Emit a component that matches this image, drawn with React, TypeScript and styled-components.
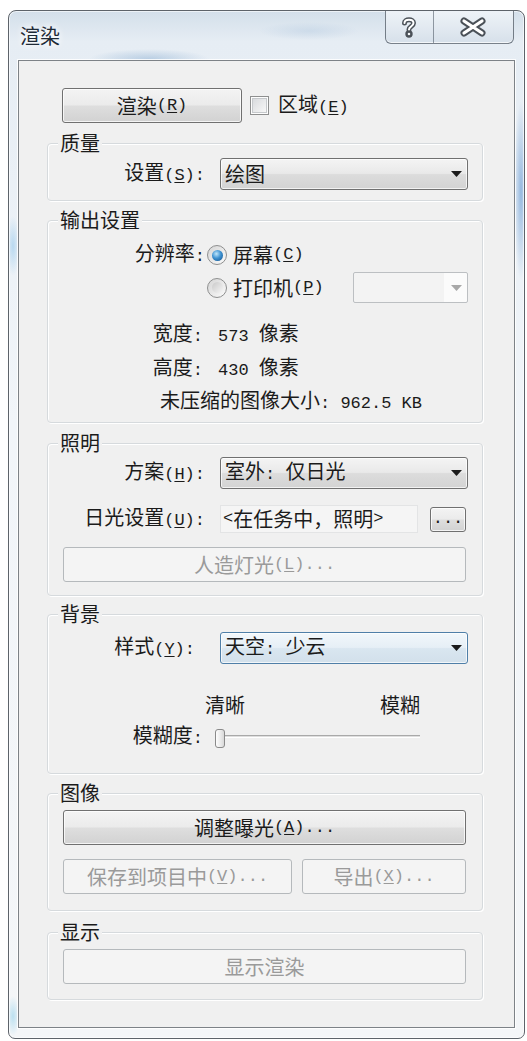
import React from "react";
import styled, { createGlobalStyle } from "styled-components";

const GlobalStyle = createGlobalStyle`
  html, body { margin: 0; padding: 0; background: #ffffff; }
  body {
    font-family: "Noto Sans CJK SC", "Liberation Sans", sans-serif;
    font-size: 20px;
    line-height: 24px;
    color: #1b1b1b;
  }
  * { box-sizing: border-box; }
`;

const Window = styled.div`
  margin: 10px 0 0 8px;
  width: 517px;
  height: 1029px;
  border: 1px solid #5d636a;
  border-radius: 8px 8px 7px 7px;
  display: flex;
  flex-direction: column;
  background:
    radial-gradient(60px 10px at 140px 48px, rgba(140, 175, 210, 0.5), transparent),
    radial-gradient(50px 9px at 300px 20px, rgba(170, 195, 220, 0.35), transparent),
    radial-gradient(7px 90px at 512px 180px, rgba(120, 165, 215, 0.75), transparent),
    radial-gradient(7px 30px at 4px 235px, rgba(150, 200, 235, 0.6), transparent),
    radial-gradient(7px 20px at 4px 1005px, rgba(150, 210, 235, 0.6), transparent),
    linear-gradient(180deg, #d3dfea 0%, #e6edf4 3%, #f1f5f9 40%, #f4f6f8 100%);
  box-shadow: inset 0 0 0 1px rgba(255, 255, 255, 0.6);
  overflow: hidden;
`;

const TitleBar = styled.div`
  height: 49px;
  display: flex;
  justify-content: space-between;
  align-items: flex-start;
  flex: none;
`;

const Title = styled.div`
  padding: 15px 0 0 11px;
  font-size: 20px;
  line-height: 20px;
  color: #1e2a36;
  text-shadow: 0 0 6px #fff, 0 0 10px #fff;
`;

const CaptionGroup = styled.div`
  margin: -1px 10px 0 0;
  height: 34px;
  width: 129px;
  display: flex;
  border: 1px solid rgba(70, 80, 92, 0.7);
  border-top: none;
  border-radius: 0 0 6px 6px;
  background: linear-gradient(180deg, #eef3f8 0%, #e3eaf1 50%, #d6e0ea 100%);
  box-shadow: inset 0 -1px 0 rgba(255, 255, 255, 0.7);
  overflow: hidden;
`;

const CaptionButton = styled.div<{ $w: number; $divider?: boolean }>`
  width: ${(p) => p.$w}px;
  height: 100%;
  display: flex;
  align-items: center;
  justify-content: center;
  border-right: ${(p) => (p.$divider ? "1px solid rgba(70, 80, 92, 0.55)" : "none")};
`;

const Client = styled.div`
  flex: 1;
  margin: 0 9px 10px 9px;
  background: #f0f0f0;
  border: 1px solid #7d8287;
  box-shadow: 0 0 0 1px rgba(255, 255, 255, 0.85);
  padding: 27px 31px 0 28px;
  display: flex;
  flex-direction: column;
`;

const Lat = styled.span`
  font-family: "Liberation Mono", "DejaVu Sans Mono", monospace;
  font-size: 17px;
`;

const Ul = styled.span`
  text-decoration: underline;
  text-underline-offset: 2px;
`;

const TopRow = styled.div`
  display: flex;
  align-items: center;
  height: 35px;
  padding-left: 15px;
`;

const Button = styled.button<{ $w?: number; $h?: number }>`
  width: ${(p) => (p.$w ? `${p.$w}px` : "100%")};
  height: ${(p) => p.$h ?? 35}px;
  flex: none;
  border: 1px solid #707070;
  border-radius: 3px;
  background: linear-gradient(180deg, #f3f3f3 0%, #ebebeb 48%, #dedede 52%, #d2d2d2 100%);
  box-shadow: inset 0 0 0 1px rgba(255, 255, 255, 0.75);
  font: inherit;
  font-size: 20px;
  line-height: 24px;
  color: #1b1b1b;
  padding: 0;
  display: flex;
  align-items: center;
  justify-content: center;
  white-space: nowrap;
  &:disabled {
    border-color: #b5b9bc;
    background: #f4f4f4;
    box-shadow: none;
    color: #9a9a9a;
  }
`;

const CheckWrap = styled.label`
  display: flex;
  align-items: center;
  margin-left: 8px;
  gap: 9px;
`;

const CheckBox = styled.span`
  width: 19px;
  height: 19px;
  border: 1px solid #8e8f8f;
  background: #fdfdfd;
  display: flex;
  align-items: center;
  justify-content: center;
  &::after {
    content: "";
    width: 13px;
    height: 13px;
    border: 1px solid #c6c9cc;
    background: linear-gradient(135deg, #d9dbde 0%, #f7f7f7 100%);
  }
`;

const Group = styled.fieldset<{ $mt: number; $pt: number; $pb: number }>`
  margin: ${(p) => p.$mt}px 0 0 0;
  padding: ${(p) => p.$pt}px 14px ${(p) => p.$pb}px 15px;
  border: 1px solid #d6dadd;
  border-radius: 4px;
  min-width: 0;
  box-shadow: inset 1px 1px 0 #ffffff, 1px 1px 0 #ffffff;
`;

const Legend = styled.legend`
  margin-left: -5px;
  padding: 0 2px;
  font-size: 20px;
  line-height: 20px;
  background: #f0f0f0;
`;

const FormRow = styled.div<{ $label: number; $gap: number; $mt?: number; $h?: number }>`
  display: grid;
  grid-template-columns: ${(p) => p.$label}px 1fr;
  column-gap: ${(p) => p.$gap}px;
  align-items: center;
  margin-top: ${(p) => p.$mt ?? 0}px;
  height: ${(p) => p.$h ?? 24}px;
`;

const FieldLabel = styled.span`
  text-align: right;
  white-space: nowrap;
`;

const Combo = styled.div<{ $focus?: boolean }>`
  height: 32px;
  border: 1px solid ${(p) => (p.$focus ? "#4f7fa8" : "#707070")};
  border-radius: 3px;
  background: ${(p) =>
    p.$focus
      ? "linear-gradient(180deg, #f2f7fb 0%, #e6eff6 48%, #d9e6f0 52%, #d2e0eb 100%)"
      : "linear-gradient(180deg, #f4f4f4 0%, #e9e9e9 48%, #dcdcdc 52%, #d3d3d3 100%)"};
  box-shadow: inset 0 0 0 1px rgba(255, 255, 255, 0.7);
  display: flex;
  align-items: center;
  justify-content: space-between;
  padding: 0 5px 0 4px;
`;

const DisabledCombo = styled.div`
  width: 115px;
  height: 31px;
  margin-left: auto;
  border: 1px solid #bcbfc2;
  border-radius: 2px;
  background: linear-gradient(90deg, #f3f3f3 0%, #f3f3f3 80%, #fbfbfb 80%, #fbfbfb 100%);
  display: flex;
  align-items: center;
  justify-content: flex-end;
  padding-right: 5px;
`;

const RadioLine = styled.div`
  display: flex;
  align-items: center;
  white-space: nowrap;
`;

const Radio = styled.span<{ $checked?: boolean }>`
  width: 20px;
  height: 20px;
  flex: none;
  margin-right: 6px;
  border-radius: 50%;
  border: 1px solid #8e8f8f;
  background: linear-gradient(135deg, #d5d5d5 0%, #fbfbfb 100%);
  display: flex;
  align-items: center;
  justify-content: center;
  &::after {
    content: "";
    width: 11px;
    height: 11px;
    border-radius: 50%;
    background: ${(p) =>
      p.$checked
        ? "radial-gradient(circle at 40% 35%, #bfe6fb 0%, #3f93d2 45%, #0d4c88 100%)"
        : "linear-gradient(135deg, #c9c9c9 0%, #f5f5f5 100%)"};
  }
`;

const PlainRow = styled.div<{ $mt: number; $pl?: number }>`
  margin-top: ${(p) => p.$mt}px;
  padding-left: ${(p) => p.$pl ?? 0}px;
  height: 24px;
  white-space: nowrap;
`;

const PathLine = styled.div`
  display: flex;
  align-items: center;
  gap: 12px;
`;

const ReadField = styled.div`
  width: 198px;
  height: 28px;
  border: 1px solid #e3e4e5;
  background: #f5f5f5;
  padding-left: 2px;
  display: flex;
  align-items: center;
  white-space: nowrap;
`;

const ButtonRow = styled.div<{ $mt?: number; $cols?: string }>`
  margin-top: ${(p) => p.$mt ?? 0}px;
  padding-right: 2px;
  display: grid;
  grid-template-columns: ${(p) => p.$cols ?? "1fr"};
  column-gap: 10px;
`;

const Ticks = styled.div`
  margin: 29px 0 0 142px;
  width: 215px;
  height: 24px;
  display: flex;
  justify-content: space-between;
`;

const SliderTrackWrap = styled.div`
  width: 205px;
  height: 24px;
  display: flex;
  align-items: center;
`;

const Thumb = styled.span`
  width: 10px;
  height: 19px;
  flex: none;
  margin-top: 3px;
  border: 1px solid #8a8a8a;
  border-radius: 3px;
  background: linear-gradient(90deg, #fdfdfd 0%, #e9e9e9 60%, #d8d8d8 100%);
`;

const Track = styled.span`
  flex: 1;
  height: 3px;
  margin-top: -2px;
  border-top: 1px solid #a9a9a9;
  border-bottom: 1px solid #ffffff;
  background: #dedede;
`;

const Arrow = ({ color = "#1b1b1b" }: { color?: string }) => (
  <svg width="11" height="6" viewBox="0 0 11 6">
    <polygon points="0,0 11,0 5.5,6" fill={color} />
  </svg>
);

const HelpIcon = () => (
  <svg width="18" height="22" viewBox="0 0 18 22">
    <g fill="none" strokeLinecap="round" strokeLinejoin="round">
      <path d="M4.5 7 C4.5 2.5, 13.5 2.5, 13.5 7 C13.5 10.5, 9 10.5, 9 13.5" stroke="#4b5158" strokeWidth="5" />
      <circle cx="9" cy="18" r="1.2" stroke="#4b5158" strokeWidth="5" />
      <path d="M4.5 7 C4.5 2.5, 13.5 2.5, 13.5 7 C13.5 10.5, 9 10.5, 9 13.5" stroke="#ffffff" strokeWidth="2" />
      <circle cx="9" cy="18" r="1" fill="#ffffff" stroke="none" />
    </g>
  </svg>
);

const CloseIcon = () => (
  <svg width="28" height="20" viewBox="0 0 28 20">
    <g fill="none" strokeLinecap="round">
      <path d="M5 4 L23 16 M23 4 L5 16" stroke="#4b5158" strokeWidth="7" />
      <path d="M5 4 L23 16 M23 4 L5 16" stroke="#ffffff" strokeWidth="3.2" />
    </g>
  </svg>
);

const Key = ({ k, colon }: { k: string; colon?: boolean }) => (
  <Lat>
    (<Ul>{k}</Ul>){colon ? ":" : ""}
  </Lat>
);

export default function App() {
  return (
    <>
      <GlobalStyle />
      <Window>
        <TitleBar>
          <Title>渲染</Title>
          <CaptionGroup>
            <CaptionButton $w={48} $divider>
              <HelpIcon />
            </CaptionButton>
            <CaptionButton $w={80}>
              <CloseIcon />
            </CaptionButton>
          </CaptionGroup>
        </TitleBar>
        <Client>
          <TopRow>
            <Button $w={180}>
              渲染<Key k="R" />
            </Button>
            <CheckWrap>
              <CheckBox />
              <span>
                区域<Key k="E" />
              </span>
            </CheckWrap>
          </TopRow>

          <Group $mt={10} $pt={5} $pb={10}>
            <Legend>质量</Legend>
            <FormRow $label={142} $gap={15} $h={32}>
              <FieldLabel>
                设置<Key k="S" colon />
              </FieldLabel>
              <Combo>
                <span>绘图</span>
                <Arrow />
              </Combo>
            </FormRow>
          </Group>

          <Group $mt={9} $pt={11} $pb={10}>
            <Legend>输出设置</Legend>
            <FormRow $label={142} $gap={2}>
              <FieldLabel>
                分辨率<Lat>:</Lat>
              </FieldLabel>
              <RadioLine>
                <Radio $checked />
                屏幕<Key k="C" />
              </RadioLine>
            </FormRow>
            <FormRow $label={142} $gap={2} $mt={7} $h={31}>
              <span />
              <RadioLine>
                <Radio />
                打印机<Key k="P" />
                <DisabledCombo>
                  <Arrow color="#a8a8a8" />
                </DisabledCombo>
              </RadioLine>
            </FormRow>
            <FormRow $label={140} $gap={15} $mt={18}>
              <FieldLabel>
                宽度<Lat>:</Lat>
              </FieldLabel>
              <span>
                <Lat>573 </Lat>像素
              </span>
            </FormRow>
            <FormRow $label={140} $gap={15} $mt={10}>
              <FieldLabel>
                高度<Lat>:</Lat>
              </FieldLabel>
              <span>
                <Lat>430 </Lat>像素
              </span>
            </FormRow>
            <PlainRow $mt={9} $pl={97}>
              未压缩的图像大小<Lat>: 962.5 KB</Lat>
            </PlainRow>
          </Group>

          <Group $mt={10} $pt={4} $pb={13}>
            <Legend>照明</Legend>
            <FormRow $label={142} $gap={15} $h={32}>
              <FieldLabel>
                方案<Key k="H" colon />
              </FieldLabel>
              <Combo>
                <span>
                  室外<Lat>: </Lat>仅日光
                </span>
                <Arrow />
              </Combo>
            </FormRow>
            <FormRow $label={142} $gap={15} $mt={16} $h={28}>
              <FieldLabel>
                日光设置<Key k="U" colon />
              </FieldLabel>
              <PathLine>
                <ReadField>
                  <Lat>&lt;</Lat>在任务中，照明<Lat>&gt;</Lat>
                </ReadField>
                <Button $w={36} $h={25}>
                  <Lat>...</Lat>
                </Button>
              </PathLine>
            </FormRow>
            <ButtonRow $mt={14}>
              <Button disabled>
                人造灯光<Key k="L" />
                <Lat>...</Lat>
              </Button>
            </ButtonRow>
          </Group>

          <Group $mt={8} $pt={8} $pb={26}>
            <Legend>背景</Legend>
            <FormRow $label={132} $gap={25} $h={32}>
              <FieldLabel>
                样式<Key k="Y" colon />
              </FieldLabel>
              <Combo $focus>
                <span>
                  天空<Lat>: </Lat>少云
                </span>
                <Arrow />
              </Combo>
            </FormRow>
            <Ticks>
              <span>清晰</span>
              <span>模糊</span>
            </Ticks>
            <FormRow $label={140} $gap={12} $mt={6}>
              <FieldLabel>
                模糊度<Lat>:</Lat>
              </FieldLabel>
              <SliderTrackWrap>
                <Thumb />
                <Track />
              </SliderTrackWrap>
            </FormRow>
          </Group>

          <Group $mt={9} $pt={7} $pb={16}>
            <Legend>图像</Legend>
            <ButtonRow>
              <Button>
                调整曝光<Key k="A" />
                <Lat>...</Lat>
              </Button>
            </ButtonRow>
            <ButtonRow $mt={14} $cols="229px 1fr">
              <Button disabled>
                保存到项目中<Key k="V" />
                <Lat>...</Lat>
              </Button>
              <Button disabled>
                导出<Key k="X" />
                <Lat>...</Lat>
              </Button>
            </ButtonRow>
          </Group>

          <Group $mt={11} $pt={7} $pb={15}>
            <Legend>显示</Legend>
            <ButtonRow>
              <Button disabled>显示渲染</Button>
            </ButtonRow>
          </Group>
        </Client>
      </Window>
    </>
  );
}
